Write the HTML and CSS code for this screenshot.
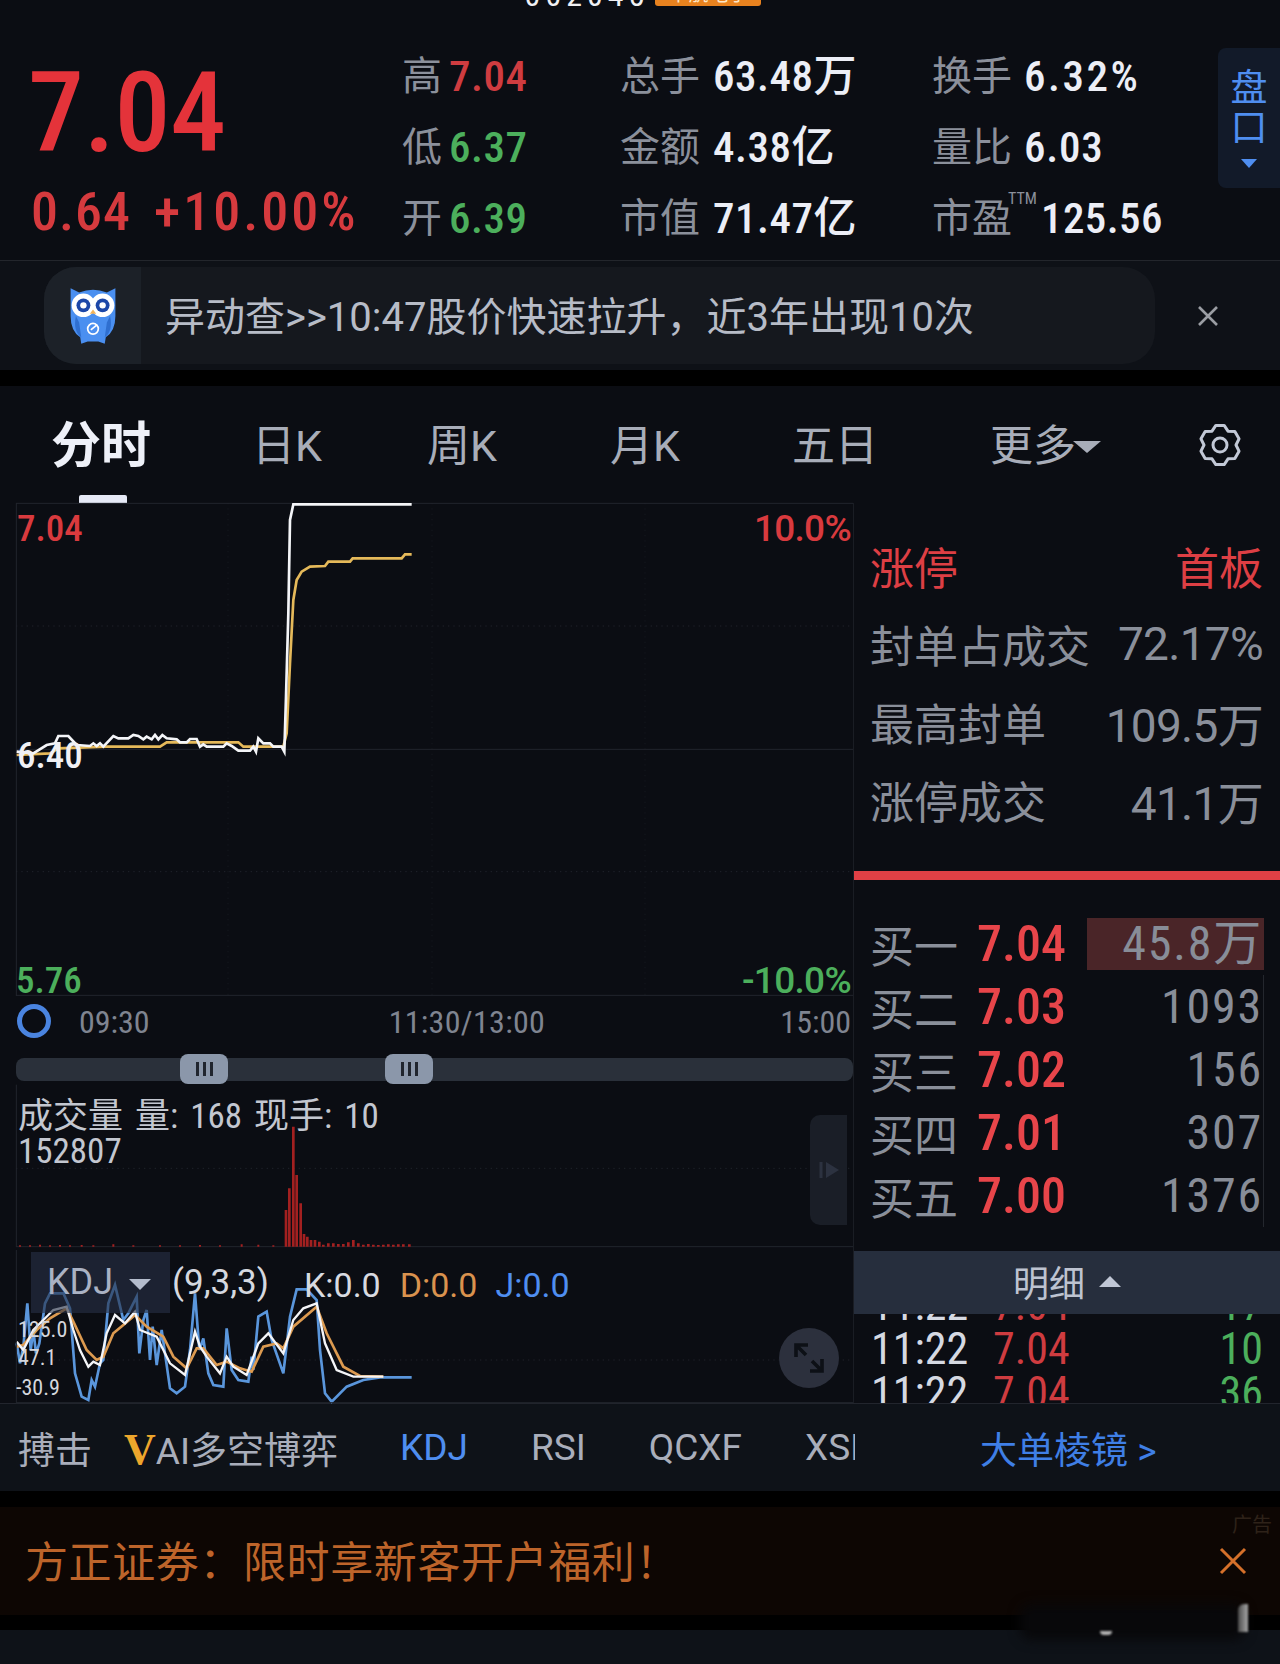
FILE: index.html
```html
<!DOCTYPE html>
<html lang="zh-CN">
<head>
<meta charset="utf-8">
<title>分时</title>
<link rel="stylesheet" href="styles.css">
</head>
<body>
<div class="app">
  <header class="quote">
    <div class="clip-top"><span class="code">002045</span><span class="badge">中航电子</span></div>
    <div class="quote-main">
      <div class="price">
        <div class="last">7.04</div>
        <div class="change"><span>0.64</span><span>+10.00%</span></div>
      </div>
      <div class="stats">
        <div class="col col-a">
          <div class="stat"><i>高</i><b class="up">7.04</b></div>
          <div class="stat"><i>低</i><b class="down">6.37</b></div>
          <div class="stat"><i>开</i><b class="down">6.39</b></div>
        </div>
        <div class="col col-b">
          <div class="stat"><i>总手</i><b>63.48万</b></div>
          <div class="stat"><i>金额</i><b>4.38亿</b></div>
          <div class="stat"><i>市值</i><b>71.47亿</b></div>
        </div>
        <div class="col col-c">
          <div class="stat"><i>换手</i><b>6.32%</b></div>
          <div class="stat"><i>量比</i><b>6.03</b></div>
          <div class="stat"><i>市盈<sup>TTM</sup></i><b>125.56</b></div>
        </div>
      </div>
      <div class="pankou"><span>盘</span><span>口</span><em></em></div>
    </div>
  </header>

  <section class="notice">
    <div class="notice-pill">
      <div class="owl">
        <svg viewBox="0 0 50 60" width="54" height="64">
          <path d="M4 4 L12 8 Q25 3 38 8 L46 4 L46 30 Q46 44 37 50 L36 56 L30 54 L20 54 L14 56 L13 50 Q4 44 4 30Z" fill="#4a8ff0"/>
          <path d="M9 30 Q6 44 14 50 L12 36Z M41 30 Q44 44 36 50 L38 36Z" fill="#2f6fd0"/>
          <circle cx="16" cy="20" r="11" fill="#fff"/><circle cx="34" cy="20" r="11" fill="#fff"/>
          <circle cx="16" cy="20" r="6.5" fill="#1c47a8"/><circle cx="34" cy="20" r="6.5" fill="#1c47a8"/>
          <circle cx="16" cy="20" r="3" fill="#fff"/><circle cx="34" cy="20" r="3" fill="#fff"/>
          <path d="M25 24 l-3 4 h6z" fill="#f2b35a"/>
          <circle cx="25" cy="42" r="5" fill="none" stroke="#fff" stroke-width="1.6"/>
          <path d="M23 43 l6 -5" stroke="#fff" stroke-width="1.6"/>
        </svg>
      </div>
      <div class="notice-text">异动查&gt;&gt;10:47股价快速拉升，近3年出现10次</div>
    </div>
    <svg class="notice-x" viewBox="0 0 24 24" width="24" height="24"><path d="M3 3 L21 21 M21 3 L3 21" stroke="#9a9da3" stroke-width="2.6"/></svg>
  </section>

  <section class="board">
    <nav class="tabs">
      <span class="tab tab-on">分时</span>
      <span class="tab tab-d">日K</span>
      <span class="tab tab-w">周K</span>
      <span class="tab tab-m">月K</span>
      <span class="tab tab-5">五日</span>
      <span class="tab tab-more">更多<em></em></span>
      <svg class="gear" viewBox="0 0 44 44" width="44" height="44">
        <path d="M17.84 2.44 H26.16 L30 8.14 L36.86 8.62 L41.02 15.82 L38 22 L41.02 28.18 L36.86 35.38 L30 35.86 L26.16 41.56 H17.84 L14 35.86 L7.14 35.38 L2.98 28.18 L6 22 L2.98 15.82 L7.14 8.62 L14 8.14 Z" fill="none" stroke="#c2c8d6" stroke-width="3" stroke-linejoin="round"/>
        <circle cx="22" cy="22" r="7" fill="none" stroke="#c2c8d6" stroke-width="3"/>
      </svg>
    </nav>

    <div class="grid">
      <div class="left">
        <div class="price-chart">
          <svg viewBox="48 69 2511 1479" width="837" height="493" preserveAspectRatio="none">
            <path class="dot" d="M48 438 H2559 M48 1175 H2559"/>
            <path class="dot dot-v" d="M684 69 V1548 M1296 69 V1548 M1935 69 V1548"/>
            <path class="solid" d="M48 70 H2559 M48 1546 H2559 M49 69 V1548 M48 808 H2559"/>
            <polyline class="yellow" points="50,825 150,820 175,805 320,800 480,800 500,787 715,787 730,800 850,800 860,760 870,550 880,360 890,300 905,275 930,260 975,258 985,245 1050,245 1058,235 1205,235 1215,223 1235,223"/>
            <polyline class="white" points="50,815 100,820 140,795 165,790 175,768 205,768 230,795 270,798 280,790 290,798 300,790 310,800 340,768 355,775 385,775 400,765 415,768 430,778 440,770 455,778 465,765 475,778 487,765 500,775 530,778 540,787 560,787 570,777 590,777 600,800 610,793 620,800 670,800 680,790 695,798 715,812 750,812 760,800 768,815 775,775 790,790 810,790 820,800 845,800 853,815 858,650 865,400 870,120 880,73 1235,73"/>
          </svg>
          <span class="axis ax-hi up">7.04</span>
          <span class="axis ax-mid">6.40</span>
          <span class="axis ax-lo down">5.76</span>
          <span class="axis ax-pu up">10.0%</span>
          <span class="axis ax-pd down">-10.0%</span>
        </div>
        <div class="times">
          <span class="ring"></span>
          <span>09:30</span>
          <span class="t-mid">11:30/13:00</span>
          <span>15:00</span>
        </div>
        <div class="slider">
          <span class="handle h1"><u></u><u></u><u></u></span>
          <span class="handle h2"><u></u><u></u><u></u></span>
        </div>
        <div class="vol">
          <svg viewBox="48 0 2511 297" width="837" height="99" preserveAspectRatio="none" class="vol-svg">
            <path class="dot" d="M48 61 H2559"/>
            <path class="solid" d="M48 296 H2559 M49 -190 V297"/>
            <path class="bars" d="M858 296 V186 M868 296 V121 M880 296 V-64 M890 296 V81 M902 296 V166 M912 296 V258 M922 296 V266 M933 296 V276 M945 296 V276 M958 296 V281 M970 296 V290 M985 296 V286 M1000 296 V286 M1015 296 V288 M1030 296 V288 M1045 296 V283 M1060 296 V276 M1075 296 V286 M1090 296 V290 M1105 296 V288 M1120 296 V290 M1135 296 V291 M1150 296 V290 M1165 296 V289 M1180 296 V290 M1195 296 V289 M1210 296 V289 M1228 296 V289"/>
            <path class="bars thin" d="M60 296 V292 M90 296 V292 M120 296 V290 M150 296 V292 M180 296 V291 M210 296 V292 M245 296 V291 M280 296 V292 M340 296 V289 M400 296 V292 M480 296 V292 M540 296 V292 M600 296 V291 M660 296 V292 M725 296 V289 M775 296 V290 M820 296 V292"/>
          </svg>
          <div class="vol-text"><span>成交量 量: 168 现手: 10</span><span>152807</span></div>
          <div class="vol-tab"><svg viewBox="0 0 24 24" width="24" height="24"><path d="M4 4 V20" stroke="#2c3240" stroke-width="3"/><path d="M9 4 L22 12 L9 20Z" fill="#2c3240"/></svg></div>
        </div>
        <div class="kdj">
          <svg viewBox="48 0 2511 480" width="837" height="160" preserveAspectRatio="none" class="kdj-svg">
            <path class="dot" d="M48 330 H2559"/>
            <polyline class="j" points="50,280 60,340 70,290 82,160 92,300 100,240 108,310 118,280 135,160 150,130 190,130 210,175 225,370 245,440 265,450 275,390 285,410 300,340 310,330 325,160 345,105 370,210 385,190 410,140 418,310 430,210 440,180 450,330 458,230 470,345 485,240 510,415 530,430 555,410 570,300 585,130 598,300 610,265 625,370 640,405 670,410 680,235 695,360 715,390 745,395 755,320 760,360 775,200 800,185 815,270 850,370 870,200 890,118 920,118 950,150 960,300 975,430 995,455 1040,410 1090,390 1140,382 1235,382"/>
            <polyline class="d" points="50,290 70,285 110,240 150,205 200,175 220,215 260,300 290,330 310,320 340,250 370,225 405,195 440,230 490,260 520,320 560,355 590,295 610,295 650,345 680,335 720,355 755,365 790,290 830,280 850,295 880,230 950,170 980,250 1030,350 1080,378 1150,380"/>
            <polyline class="k" points="50,275 70,300 100,240 130,210 160,180 200,170 220,240 240,300 265,350 280,335 300,345 320,250 345,195 375,220 405,185 420,240 470,260 510,340 555,375 585,245 600,290 620,320 660,370 680,320 700,350 740,375 775,280 805,250 850,310 880,210 910,175 950,160 975,280 1010,360 1060,380 1150,380"/>
            <path class="solid" d="M48 458 H2559 M49 0 V458"/>
          </svg>
          <div class="kdj-head">
            <span class="kdj-sel">KDJ<em></em></span>
            <span class="kdj-par">(9,3,3)</span>
            <span class="kdj-k">K:0.0</span>
            <span class="kdj-d">D:0.0</span>
            <span class="kdj-j">J:0.0</span>
          </div>
          <span class="ky ky1">125.0</span>
          <span class="ky ky2">47.1</span>
          <span class="ky ky3">-30.9</span>
          <div class="expand"><svg viewBox="0 0 36 36" width="36" height="36"><path d="M5 5 L15 15 M5 17 V5 H17 M31 31 L21 21 M31 19 V31 H19" fill="none" stroke="#0d1016" stroke-width="3.600"/></svg></div>
        </div>
      </div>

      <aside class="right">
        <div class="limit">
          <div class="lim-head"><span>涨停</span><span>首板</span></div>
          <div class="lim-row"><span>封单占成交</span><span>72.17%</span></div>
          <div class="lim-row"><span>最高封单</span><span>109.5万</span></div>
          <div class="lim-row"><span>涨停成交</span><span>41.1万</span></div>
        </div>
        <div class="book">
          <div class="bk"><i>买一</i><b>7.04</b><s class="qty-hi">45.8万</s></div>
          <div class="bk"><i>买二</i><b>7.03</b><s>1093</s></div>
          <div class="bk"><i>买三</i><b>7.02</b><s>156</s></div>
          <div class="bk"><i>买四</i><b>7.01</b><s>307</s></div>
          <div class="bk"><i>买五</i><b>7.00</b><s>1376</s></div>
        </div>
        <div class="detail-bar">明细<em></em></div>
        <div class="ticks">
          <div class="tk"><span>11:22</span><b>7.04</b><s>17</s></div>
          <div class="tk"><span>11:22</span><b>7.04</b><s>10</s></div>
          <div class="tk"><span>11:22</span><b>7.04</b><s>36</s></div>
        </div>
      </aside>
    </div>

    <div class="bottom-tabs">
      <div class="ind-list">
        <span class="ind ind-a">搏击</span>
        <span class="ind ind-b"><em>V</em>AI多空博弈</span>
        <span class="ind ind-on">KDJ</span>
        <span class="ind">RSI</span>
        <span class="ind">QCXF</span>
        <span class="ind">XSI</span>
      </div>
      <div class="lens">大单棱镜 &gt;</div>
    </div>
  </section>

  <section class="ad">
    <span class="ad-tag">广告</span>
    <span class="ad-text">方正证券：限时享新客开户福利！</span>
    <svg class="ad-x" viewBox="0 0 28 28" width="28" height="28"><path d="M2 2 L26 26 M26 2 L2 26" stroke="#d5702a" stroke-width="3"/></svg>
  </section>
  <footer class="foot"></footer>
  <div class="smudge"></div>
  <div class="speck speck-a"></div>
  <div class="speck speck-b"></div>
</div>
</body>
</html>
```
FILE: styles.css
```css
* { box-sizing: border-box; }
html, body { margin: 0; padding: 0; background: #0b0d13; }
body { font-family: Roboto, "Noto Sans CJK SC", sans-serif; font-stretch: 85%; color: #e6e8f0; }
.app { position: relative; width: 1280px; height: 1664px; overflow: hidden; display: flex; flex-direction: column; }
i, em, s, u, b { font-style: normal; text-decoration: none; font-weight: 400; }
.up { color: #d93a3e; }
.down { color: #4caf5c; }

.quote { height: 261px; flex: none; background: #0b0d13; border-bottom: 1px solid #23262c; display: flex; flex-direction: column; }
.clip-top { height: 6px; overflow: hidden; display: flex; justify-content: center; align-items: flex-end; gap: 6px; padding-left: 6px; }
.code { font-size: 32px; line-height: 22px; color: #f0f0f4; flex: none; letter-spacing: 5px; }
.badge { flex: none; width: 106px; height: 22px; background: #e8821f; border-radius: 3px; font-size: 20px; line-height: 20px; color: #fde7c8; text-align: center; }
.quote-main { flex: 1; display: flex; align-items: flex-start; }
.price { width: 402px; padding: 62px 0 0 28px; flex: none; }
.last { font-size: 112px; line-height: 90px; font-weight: 500; color: #e4333a; letter-spacing: -.3px; }
.change { display: flex; gap: 23px; font-size: 54px; line-height: 54px; margin-top: 27px; padding-left: 3px; color: #d63a3e; font-weight: 500; letter-spacing: 1px; }
.change span:last-child { letter-spacing: 3px; }
.stats { flex: 1; display: flex; padding-top: 51px; }
.col { display: flex; flex-direction: column; gap: 32px; }
.col-a { width: 218px; }
.col-b { width: 312px; }
.stat { display: flex; align-items: center; height: 39px; gap: 7px; white-space: nowrap; }
.col-b .stat { gap: 13px; }
.col-c .stat { gap: 12px; }
.stat i { font-size: 40px; line-height: 39px; color: #8b909b; position: relative; }
.stat b { font-size: 43px; line-height: 39px; font-weight: 500; color: #eceef6; letter-spacing: .5px; }
.col-c .stat b { letter-spacing: .8px; }
.col-c .stat:first-child b { letter-spacing: 2.500px; }
.stat b.up { color: #cf3c40; }
.stat b.down { color: #4caf5c; }
.stat sup { font-size: 16px; line-height: 16px; position: absolute; left: 76px; top: -8px; color: #8b909b; }
.col-c .stat:last-child b { margin-left: 17px; letter-spacing: .4px; }
.pankou { width: 62px; height: 140px; margin-top: 42px; flex: none; background: #121a29; border-radius: 8px 0 0 8px; display: flex; flex-direction: column; align-items: center; color: #4f8ef0; font-size: 37px; line-height: 40px; padding: 21px 0 0 0; }
.pankou em { width: 0; height: 0; margin-top: 10px; border: 8px solid transparent; border-top: 9px solid #4f8ef0; border-bottom: 0; }

.notice { height: 125px; flex: none; background: #0e1117; display: flex; align-items: flex-start; padding: 6px 0 0 44px; border-bottom: 16px solid #000; }
.notice-pill { width: 1111px; height: 97px; border-radius: 32px; overflow: hidden; background: #15181e; display: flex; align-items: center; }
.owl { width: 97px; height: 100%; background: #1c2128; display: flex; align-items: center; justify-content: center; }
.notice-text { padding-left: 24px; padding-bottom: 4px; font-size: 40px; font-stretch: 100%; color: #b7bcc7; white-space: nowrap; }
.notice-x { margin: 37px 0 0 41px; flex: none; }

.board { flex: none; height: 1105px; display: flex; flex-direction: column; background: #0b0d13; }
.tabs { height: 117px; position: relative; display: flex; align-items: center; font-size: 43px; font-stretch: 100%; color: #a8adb9; flex: none; }
.tab { position: absolute; top: 33px; line-height: 54px; white-space: nowrap; }
.tab-on { left: 51px; font-size: 50px; font-weight: 700; color: #eef0f8; }
.tab-on::after { content: ""; position: absolute; left: 28px; top: 76px; width: 48px; height: 8px; background: #e6e9f6; border-radius: 2px 2px 0 0; }
.tab-d { left: 252px; }
.tab-w { left: 427px; }
.tab-m { left: 610px; }
.tab-5 { left: 792px; }
.tab-more { left: 990px; }
.tab-more em { display: inline-block; width: 0; height: 0; border: 14px solid transparent; border-top: 12px solid #a8adb9; border-bottom: 0; vertical-align: 8px; margin-left: -3px; }
.gear { position: absolute; left: 1198px; top: 37px; }

.grid { display: grid; grid-template-columns: 853px 427px; height: 900px; flex: none; }
.left { display: flex; flex-direction: column; padding-left: 16px; }
.price-chart { position: relative; height: 493px; flex: none; }
.price-chart svg, .vol-svg, .kdj-svg { display: block; position: absolute; left: 0; top: 0; overflow: visible; }
.solid { fill: none; stroke: #22252d; stroke-width: 3; }
.dot { fill: none; stroke: #20232b; stroke-width: 3; stroke-dasharray: 4 12; }
.dot-v { stroke: #15181f; }
.white { fill: none; stroke: #f4f5f8; stroke-width: 8; }
.yellow { fill: none; stroke: #e5b95a; stroke-width: 8; }
.bars { fill: none; stroke: #a32020; stroke-width: 8; }
.thin { stroke-width: 6; }
.j { fill: none; stroke: #5a96dc; stroke-width: 8; }
.d { fill: none; stroke: #dc9a50; stroke-width: 8; }
.k { fill: none; stroke: #f4f5f8; stroke-width: 7; }
.axis { position: absolute; font-size: 37px; line-height: 40px; font-weight: 500; }
.ax-hi { left: 1px; top: 6px; }
.ax-mid { left: 1px; top: 233px; color: #f0f0f4; }
.ax-lo { left: 0; top: 458px; }
.ax-pu { right: 2px; top: 6px; font-stretch: 92%; letter-spacing: -.7px; }
.ax-pd { right: 2px; top: 458px; font-stretch: 92%; letter-spacing: -.7px; }
.times { height: 58px; flex: none; position: relative; display: flex; align-items: center; padding: 0 0 6px 63px; font-size: 32px; color: #7f8490; }
.times span:last-child { margin-left: auto; margin-right: 2px; }
.t-mid { margin-left: 239px; letter-spacing: .3px; }
.ring { position: absolute; left: 1px; top: 8px; width: 34px; height: 34px; border: 5px solid #4a84e0; border-radius: 50%; }
.slider { height: 23px; flex: none; margin-top: 4px; position: relative; background: #2a303a; border-radius: 8px; }
.handle { position: absolute; top: -4px; width: 48px; height: 30px; background: #8b97aa; border-radius: 8px; display: flex; align-items: center; justify-content: center; gap: 4px; }
.handle u { width: 3px; height: 14px; background: #20252e; }
.h1 { left: 164px; }
.h2 { left: 369px; }
.vol { position: relative; height: 150px; margin-top: 16px; flex: none; }
.vol-svg { top: 51px; }
.vol-text { position: absolute; left: 2px; top: 2px; display: flex; flex-direction: column; font-size: 35px; font-stretch: 86%; line-height: 35px; word-spacing: 4px; color: #c3c7d0; white-space: nowrap; }
.vol-tab { position: absolute; left: 794px; top: 18px; width: 37px; height: 110px; background: #1a1e27; border-radius: 10px 0 0 10px; display: flex; align-items: center; justify-content: center; }
.kdj { position: relative; flex: 1; }
.kdj-svg { top: 3px; }
.kdj-head { position: absolute; left: 15px; top: 5px; height: 61px; display: flex; align-items: center; font-size: 35px; font-stretch: 100%; white-space: nowrap; }
.kdj-sel { width: 139px; height: 61px; background: rgba(38,48,70,.62); padding-left: 16px; font-size: 36px; line-height: 61px; color: #aab2c4; }
.kdj-sel em { display: inline-block; width: 0; height: 0; margin-left: 16px; vertical-align: 4px; border: 11px solid transparent; border-top: 11px solid #b4bccc; border-bottom: 0; }
.kdj-par { margin-left: 2px; color: #d5d8df; }
.kdj-k { margin: 4px 0 0 35px; color: #d8dae0; font-size: 34px; }
.kdj-d { margin: 4px 0 0 19px; color: #d9924e; font-size: 34px; }
.kdj-j { margin: 4px 0 0 18px; color: #4f8ef0; font-size: 34px; }
.ky { position: absolute; left: 2px; font-size: 22px; line-height: 24px; color: #d4d6dc; }
.ky1 { top: 71px; }
.ky2 { top: 99px; }
.ky3 { top: 129px; left: 0; }
.expand { position: absolute; left: 763px; top: 81px; width: 60px; height: 60px; border-radius: 50%; background: #2c303d; display: flex; align-items: center; justify-content: center; }

.right { display: flex; flex-direction: column; border-left: 1px solid #1a1d24; min-height: 0; }
.limit { height: 377px; flex: none; padding: 36px 17px 0 16px; border-bottom: 9px solid #e04045; }
.lim-head, .lim-row { display: flex; justify-content: space-between; align-items: center; height: 54px; font-size: 44px; color: #8a8f9a; white-space: nowrap; }
.lim-head { color: #dd3f44; }
.lim-row { margin-top: 24px; }
.lim-row span:last-child { font-size: 46px; font-stretch: 92%; letter-spacing: -.7px; }
.book { flex: none; height: 371px; padding: 32px 16px 0 16px; position: relative; }
.bk { display: flex; align-items: center; height: 63px; white-space: nowrap; }
.bk + .bk { border-right: 1px solid #24272e; }
.bk i { width: 107px; font-size: 44px; color: #8a8f9a; }
.bk b { font-size: 50px; font-weight: 500; color: #e8454a; }
.bk s { margin-left: auto; font-size: 48px; letter-spacing: 1.800px; color: #888d98; }
.qty-hi { width: 177px; height: 52px; background: #4a2528; text-align: right; line-height: 52px; padding-right: 1px; }
.detail-bar { height: 63px; flex: none; background: #262e3d; display: flex; align-items: center; justify-content: center; gap: 14px; padding-bottom: 3px; font-size: 36px; color: #bdc3d0; }
.detail-bar em { width: 0; height: 0; border: 11px solid transparent; border-bottom: 11px solid #c0c7d6; border-top: 0; }
.ticks { flex: 1; overflow: hidden; padding: 0 17px; min-height: 0; }
.tk { display: flex; align-items: center; height: 44px; line-height: 44px; font-size: 44px; white-space: nowrap; color: #d5d9e2; }
.tk:first-child { margin-top: -31px; }
.tk span { width: 122px; }
.tk b { color: #cf3c40; }
.tk s { margin-left: auto; color: #4caf5c; }

.bottom-tabs { height: 88px; flex: none; background: #0e1218; border-top: 1px solid #22252d; display: flex; align-items: center; }
.ind-list { width: 855px; display: flex; align-items: center; overflow: hidden; height: 60px; font-size: 37px; font-stretch: 100%; color: #a9aebb; white-space: nowrap; flex: none; }
.ind { margin-left: 63px; flex: none; }
.ind-a { margin-left: 18px; }
.ind-b { margin-left: 32px; }
.ind-b em { font-family: "Liberation Serif", serif; font-weight: 700; font-size: 44px; color: #eda62c; }
.ind-on { margin-left: 62px; color: #4f8ef0; }
.lens { margin-left: 125px; font-size: 37px; font-stretch: 100%; color: #3f7fe6; }

.ad { height: 139px; flex: none; background: #0d0603; border-top: 16px solid #000; border-bottom: 15px solid #000; position: relative; display: flex; align-items: center; padding: 0 0 4px 25px; }
.ad-text { font-size: 43px; letter-spacing: .6px; color: #bd642a; white-space: nowrap; }
.ad-tag { position: absolute; right: 8px; top: 2px; font-size: 20px; color: #2e2219; }
.ad-x { position: absolute; left: 1219px; top: 40px; }
.foot { flex: 1; background: #0e1218; }
.smudge { position: absolute; left: 1020px; top: 1604px; width: 225px; height: 36px; background: #08080a; filter: blur(6px); border-radius: 12px; }
.speck { position: absolute; filter: blur(1px); }
.speck-a { left: 1100px; top: 1631px; width: 12px; height: 4px; background: #b5b5b5; border-radius: 0 0 8px 8px; }
.speck-b { left: 1238px; top: 1604px; width: 10px; height: 28px; background: linear-gradient(90deg, #4a4a4a, #a8a8a8); border-radius: 6px 0 0 0; }
```
